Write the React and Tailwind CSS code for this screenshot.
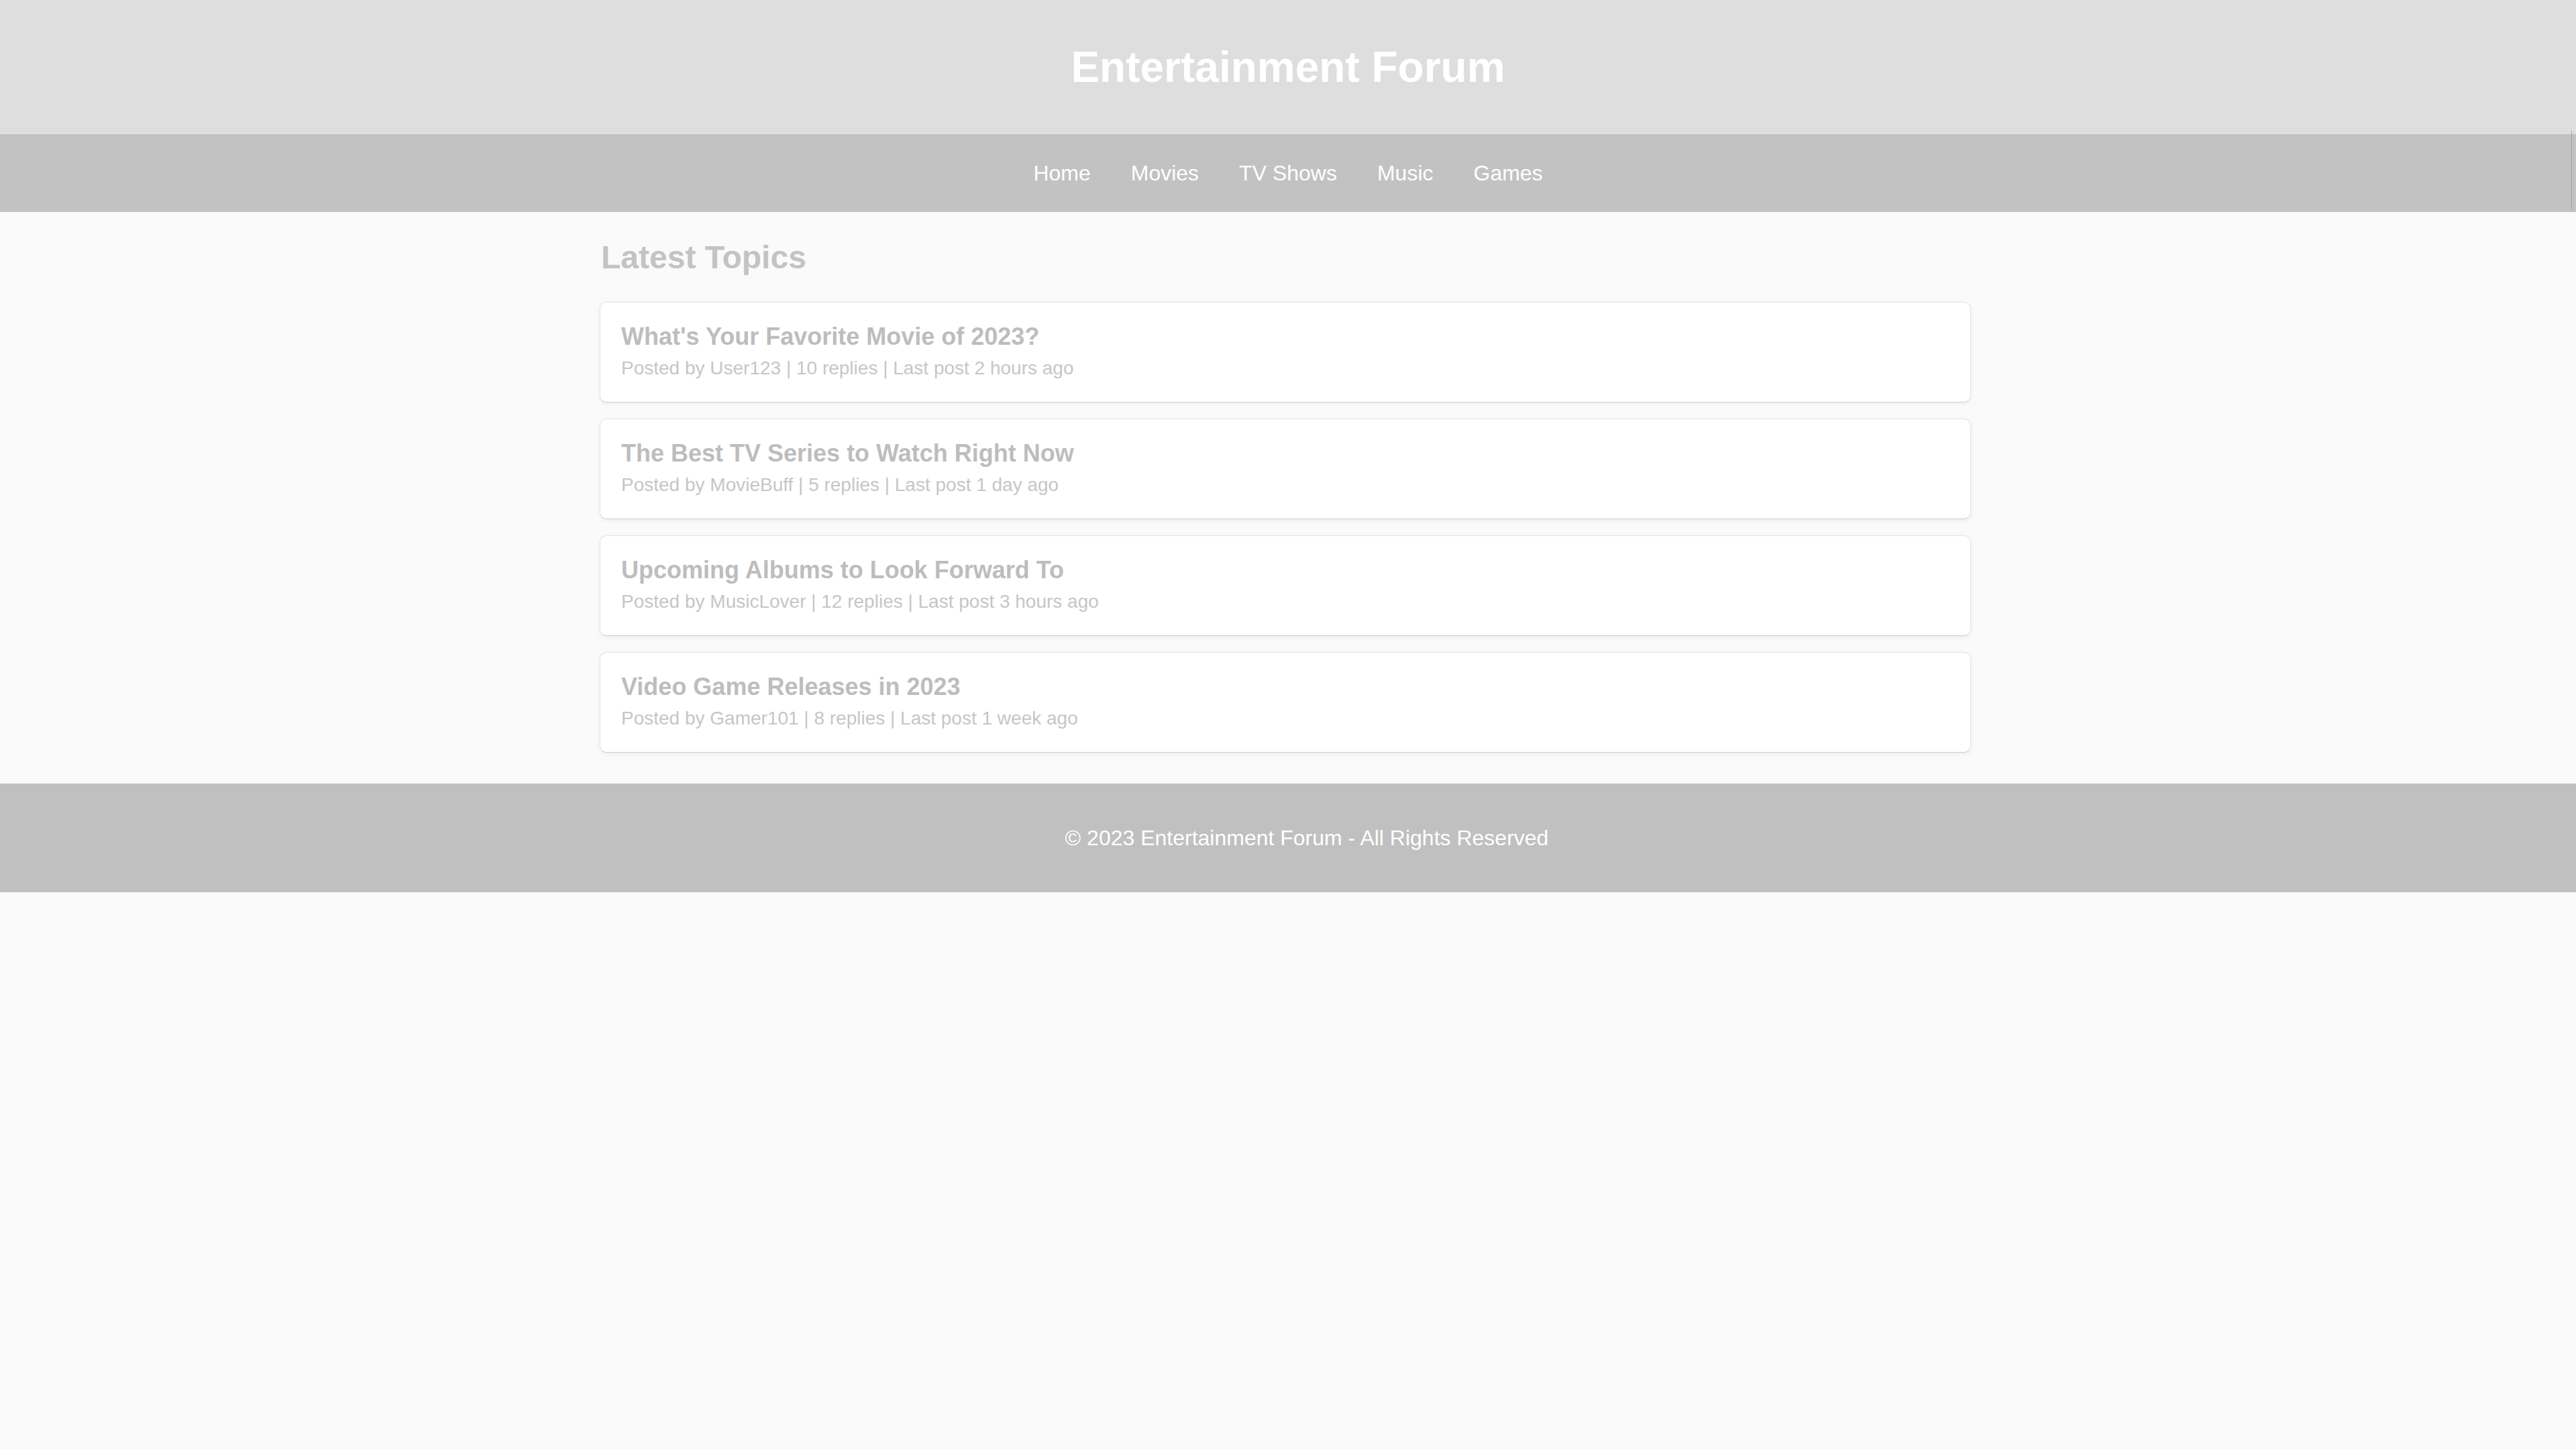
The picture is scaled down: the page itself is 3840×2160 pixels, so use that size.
export default function App() {
  const topics = [
    { title: "What's Your Favorite Movie of 2023?", meta: "Posted by User123 | 10 replies | Last post 2 hours ago" },
    { title: "The Best TV Series to Watch Right Now", meta: "Posted by MovieBuff | 5 replies | Last post 1 day ago" },
    { title: "Upcoming Albums to Look Forward To", meta: "Posted by MusicLover | 12 replies | Last post 3 hours ago" },
    { title: "Video Game Releases in 2023", meta: "Posted by Gamer101 | 8 replies | Last post 1 week ago" },
  ];
  const links = ["Home", "Movies", "TV Shows", "Music", "Games"];
  return (
    <div className="min-h-[2160px] bg-[#fafafa] font-['Liberation_Sans',Arial,sans-serif] relative">
      <header className="h-[200px] bg-[#dedede] flex items-center justify-center">
        <h1 className="text-[64px] font-bold text-white leading-[normal]">Entertainment Forum</h1>
      </header>
      <nav className="h-[116px] bg-[#c2c2c2] flex items-center justify-center">
        {links.map((l) => (
          <a key={l} className="mx-[30px] text-[32px] text-white leading-[normal]">{l}</a>
        ))}
      </nav>
      <div className="absolute left-[3833px] top-[195px] w-px h-[117px] bg-[#a3a3a3]" />
      <main className="w-[2044px] ml-[894px] pt-[40px] pb-[46px]">
        <h2 className="text-[48px] font-bold text-[#c3c3c3] leading-[normal] mb-[39px] pl-[2px]">Latest Topics</h2>
        <div className="flex flex-col gap-[24px]">
          {topics.map((t) => (
            <div
              key={t.title}
              className="bg-white rounded-[10px] border border-[#e4e4e4] border-b-[#cdcdcd] shadow-[0_2px_6px_rgba(0,0,0,0.06)] pl-[31px] pr-[30px] pt-[30px] pb-[34px]"
            >
              <h3 className="text-[36px] font-bold text-[#bdbdbd] leading-[normal] mb-[10px]">{t.title}</h3>
              <p className="text-[28px] text-[#c6c6c6] leading-[normal]">{t.meta}</p>
            </div>
          ))}
        </div>
      </main>
      <footer className="h-[162px] bg-[#c0c0c0] flex items-center justify-center">
        <p className="text-[32px] text-white leading-[normal] pl-[56px]">© 2023 Entertainment Forum - All Rights Reserved</p>
      </footer>
    </div>
  );
}
